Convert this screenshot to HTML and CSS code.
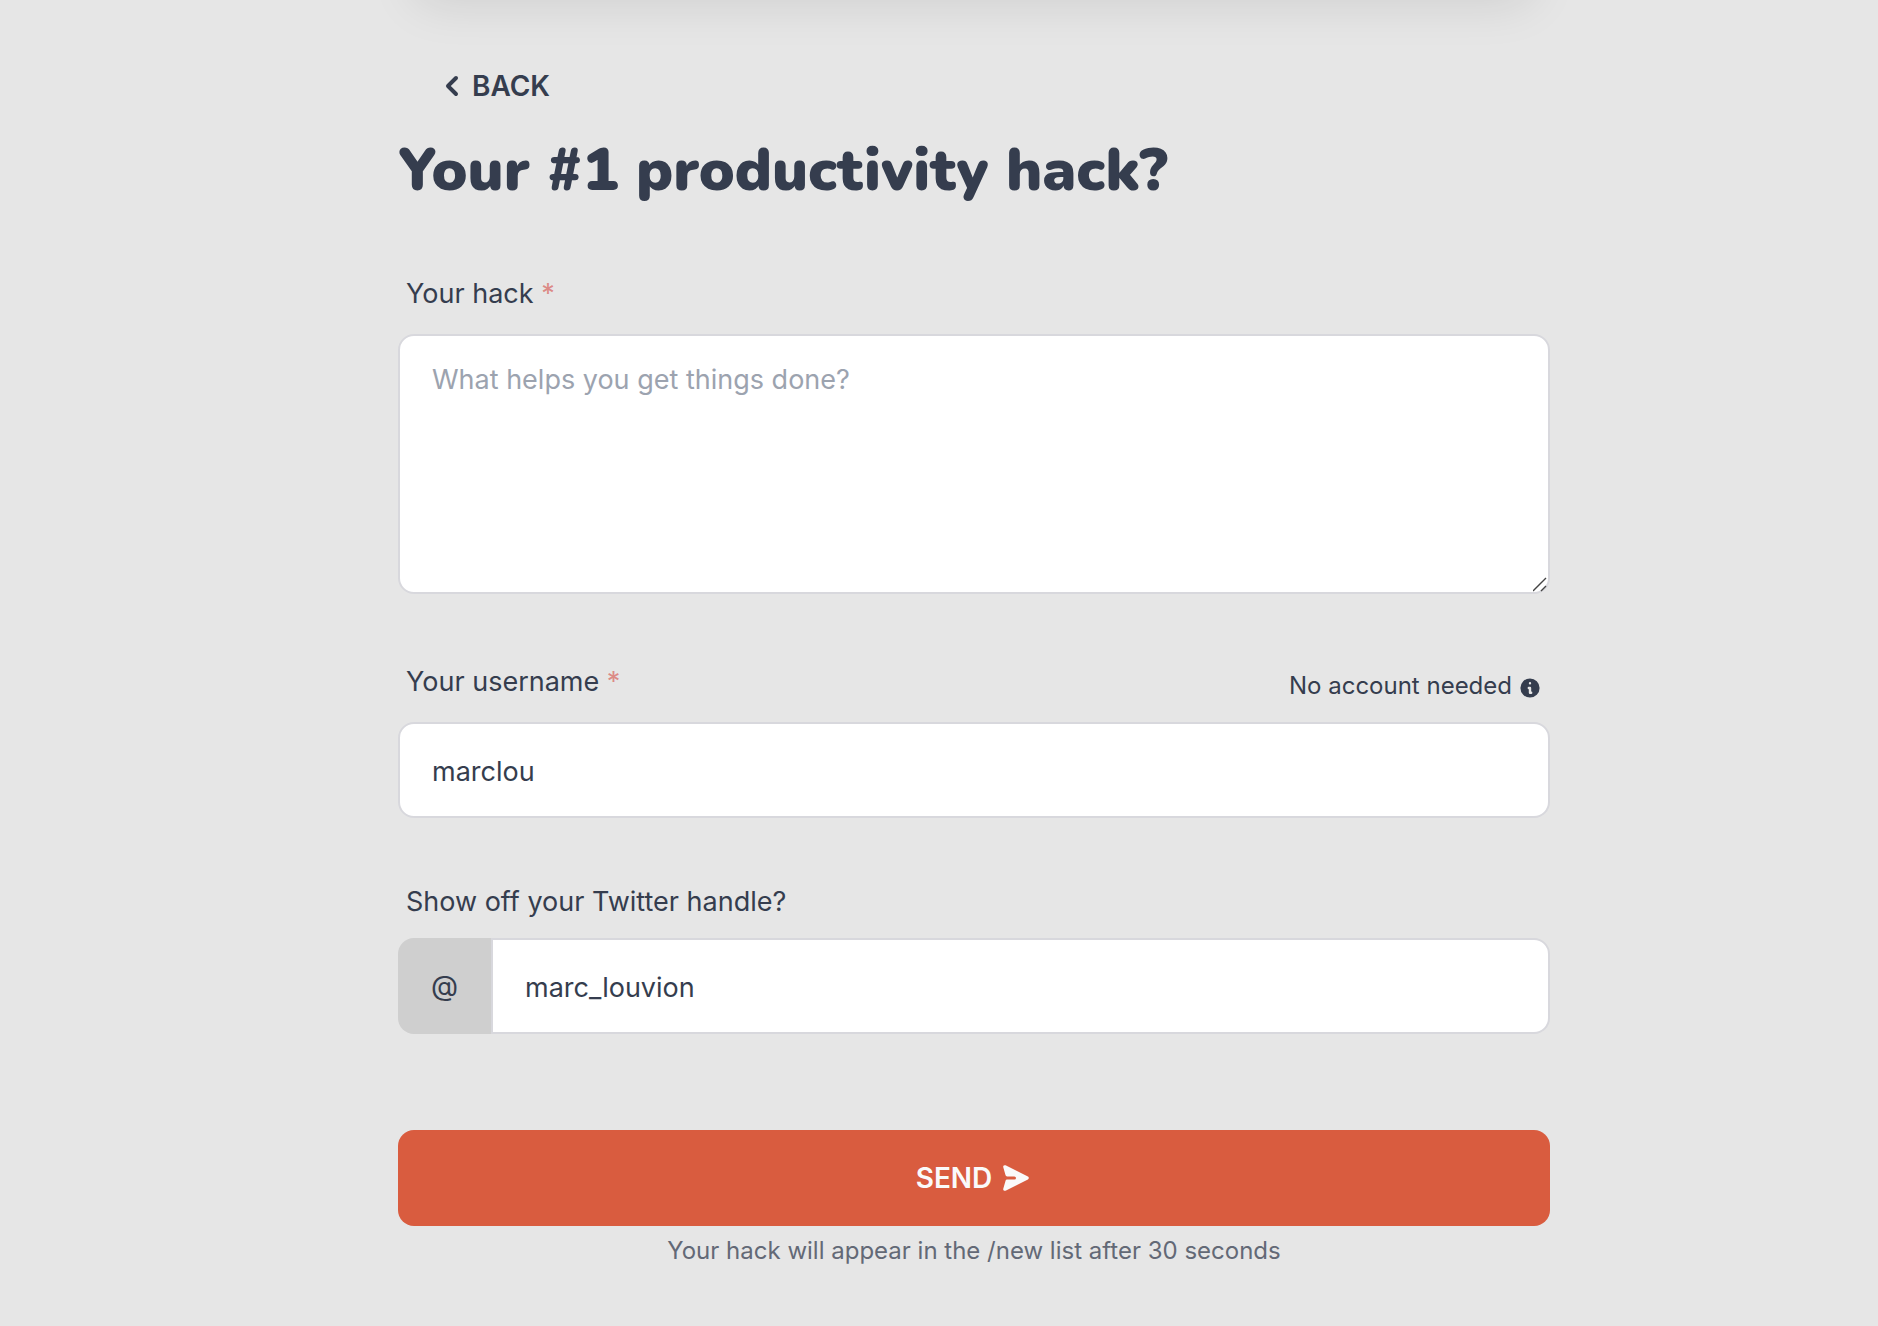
FILE: index.html
```html
<!DOCTYPE html>
<html lang="en">
<head>
  <meta charset="UTF-8" />
  <title>Your #1 productivity hack?</title>
  <meta name="viewport" content="width=device-width, initial-scale=1.0" />
  <link rel="stylesheet" href="styles.css">
</head>
<body>
  <main class="page">
    <div class="card"></div>

    <a href="#" class="back-btn">
      <svg class="icon-back" viewBox="0 0 20 20" fill="currentColor" aria-hidden="true">
        <path fill-rule="evenodd" d="M12.707 5.293a1 1 0 010 1.414L9.414 10l3.293 3.293a1 1 0 01-1.414 1.414l-4-4a1 1 0 010-1.414l4-4a1 1 0 011.414 0z" />
      </svg>
      BACK
    </a>

    <h1>Your #1 productivity hack?</h1>

    <form class="hack-form">
      <div class="field">
        <div class="label-row is-required">
          <label for="hack">Your hack <span class="star">*</span></label>
        </div>
        <textarea id="hack" class="input" placeholder="What helps you get things done?"></textarea>
      </div>

      <div class="field">
        <div class="label-row is-required">
          <label for="username">Your username <span class="star">*</span></label>
          <span class="hint">
            No account needed
            <svg class="icon-info" viewBox="0 0 20 20" fill="currentColor" aria-hidden="true">
              <path fill-rule="evenodd" d="M18 10a8 8 0 11-16 0 8 8 0 0116 0zm-7-4a1 1 0 11-2 0 1 1 0 012 0zM9 9a1 1 0 000 2v3a1 1 0 001 1h1a1 1 0 100-2v-3a1 1 0 00-1-1H9z" />
            </svg>
          </span>
        </div>
        <input type="text" id="username" class="input" value="marclou">
      </div>

      <div class="field">
        <div class="label-row">
          <label for="twitter">Show off your Twitter handle?</label>
        </div>
        <div class="input-group">
          <span class="prefix">@</span>
          <input type="text" id="twitter" class="input" value="marc_louvion">
        </div>
      </div>

      <button type="submit" class="send-btn">
        SEND
        <svg class="icon-send" viewBox="0 0 20 20" fill="currentColor" aria-hidden="true">
          <path d="M10.894 2.553a1 1 0 00-1.788 0l-7 14a1 1 0 001.169 1.409l5-1.429A1 1 0 009 15.571V11a1 1 0 112 0v4.571a1 1 0 00.725.962l5 1.428a1 1 0 001.17-1.408l-7-14z" />
        </svg>
      </button>
      <p class="note">Your hack will appear in the /new list after 30 seconds</p>
    </form>
  </main>
</body>
</html>
```
FILE: styles.css
```css
:root {
  --bg: #e6e6e6;
  --field-bg: #fff;
  --prefix-bg: #cfcfcf;
  --border: #d8d8dd;
  --accent: #d95c3f;
  --text: #353d4e;
  --muted: #636976;
  --placeholder: #9ca3af;
  --required: #dc8a86;
  --radius: 16px;
}
* {
  box-sizing: border-box;
}
body {
  margin: 0;
  padding: 0 0 60px 70px;
  font-family: Inter, "Liberation Sans", sans-serif;
  font-size: 28px;
  line-height: 40px;
  background-color: var(--bg);
  color: var(--text);
}
.page {
  display: flex;
  flex-direction: column;
  max-width: 1152px;
  margin: 0 auto;
}
/* bottom of the card that sits above the form */
.card {
  height: 100px;
  margin-top: -120px;
  border-radius: 32px;
  box-shadow: 0 40px 50px -18px rgba(0, 0, 0, 0.11);
}
.back-btn {
  display: flex;
  align-items: center;
  align-self: flex-start;
  height: 96px;
  margin-top: 58px;
  padding: 0 34px;
  color: var(--text);
  font-weight: 600;
  text-decoration: none;
}
.icon-back {
  width: 40px;
  height: 40px;
}
h1 {
  margin: 0 0 56px;
  font-family: Nunito, "Open Sans", sans-serif;
  font-size: 60px;
  font-weight: 900;
  line-height: 72px;
}
.hack-form {
  display: flex;
  flex-direction: column;
}
.field {
  display: flex;
  flex-direction: column;
  margin-bottom: 48px;
}
.field:first-child {
  margin-bottom: 56px;
}
.label-row {
  display: flex;
  justify-content: space-between;
  align-items: flex-end;
  padding: 16px 8px;
  font-size: 27px;
}
.label-row.is-required {
  padding: 12px 8px 20px;
}
.star {
  color: var(--required);
}
.hint {
  display: flex;
  align-items: center;
  gap: 6px;
  font-size: 24px;
  line-height: 32px;
}
.icon-info {
  width: 24px;
  height: 24px;
  margin-top: 4px;
}
.input {
  width: 100%;
  height: 96px;
  padding: 2px 32px 0;
  border: 2px solid var(--border);
  border-radius: var(--radius);
  background: var(--field-bg);
  color: var(--text);
  font: inherit;
  font-size: 27px;
}
.input::placeholder {
  color: var(--placeholder);
  opacity: 1;
}
textarea.input {
  display: block;
  height: 260px;
  padding: 16px 32px;
  line-height: 56px;
  resize: vertical;
}
textarea.input::-webkit-resizer {
  background: url("data:image/svg+xml,%3Csvg xmlns='http://www.w3.org/2000/svg' viewBox='0 0 15 15'%3E%3Cpath d='M0 14L13 1M8 14L13 9' fill='none' stroke='%23444' stroke-width='1.4'/%3E%3C/svg%3E") no-repeat;
}
.input-group {
  display: flex;
}
.prefix {
  display: flex;
  align-items: center;
  justify-content: center;
  width: 93px;
  border-radius: var(--radius) 0 0 var(--radius);
  background: var(--prefix-bg);
}
.input-group .input {
  flex: 1;
  border-radius: 0 var(--radius) var(--radius) 0;
}
.send-btn {
  display: flex;
  align-items: center;
  justify-content: center;
  gap: 8px;
  height: 96px;
  margin-top: 48px;
  border: none;
  border-radius: var(--radius);
  background: var(--accent);
  color: #fafafa;
  font: inherit;
  font-weight: 600;
  cursor: pointer;
}
.icon-send {
  width: 32px;
  height: 32px;
  transform: rotate(90deg);
}
.note {
  margin: 5px 0 0;
  color: var(--muted);
  font-size: 24px;
  text-align: center;
}
```
